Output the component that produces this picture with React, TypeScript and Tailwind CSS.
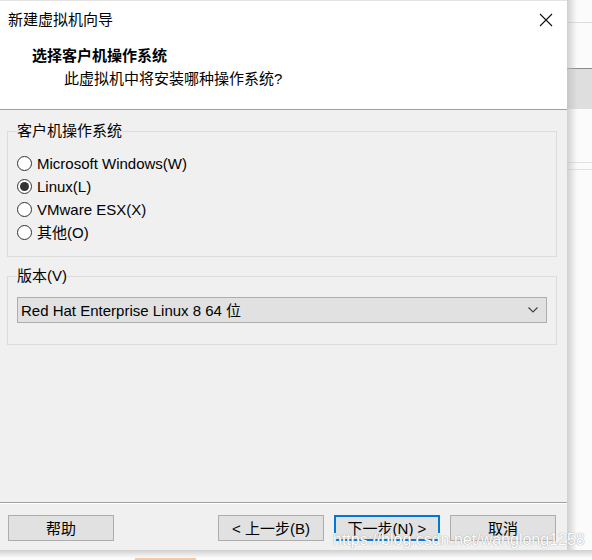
import React from "react";

const font = { fontFamily: '"Liberation Sans", "Noto Sans CJK SC", sans-serif' };

function Radio({ label, checked }: { label: string; checked?: boolean }) {
  return (
    <div className="flex items-center h-[23px] gap-[5px]">
      <span className="w-[15px] h-[15px] rounded-full border border-[#333333] bg-white flex items-center justify-center">
        {checked && <span className="w-[9px] h-[9px] rounded-full bg-[#333333]" />}
      </span>
      <span className="text-[15px] leading-none text-black">{label}</span>
    </div>
  );
}

function Btn({ label, primary }: { label: string; primary?: boolean }) {
  return (
    <div
      className={
        "w-[106px] h-[26px] flex items-center justify-center bg-[#e1e1e1] text-[15px] leading-none text-black " +
        (primary ? "border-2 border-[#0078d7]" : "border border-[#adadad]")
      }
    >
      {label}
    </div>
  );
}

export default function App() {
  return (
    <div className="w-[592px] h-[560px] relative overflow-hidden bg-[#fbfbfb] flex flex-col" style={font}>
      <div className="flex h-[550px]">
        {/* Dialog */}
        <div className="w-[567px] h-[550px] flex flex-col bg-[#f0f0f0]">
          <div className="bg-white border-t border-[#e3e3e3] h-[110px] flex flex-col border-b border-b-[#a0a0a0]">
            <div className="h-[37px] flex items-center justify-between pl-[8px] pr-[14px]">
              <span className="text-[15px] leading-none text-black">新建虚拟机向导</span>
              <svg width="14" height="14" viewBox="0 0 14 14">
                <path d="M1 1 L13 13 M13 1 L1 13" stroke="#111" strokeWidth="1.1" />
              </svg>
            </div>
            <div className="pl-[32px] pt-[10px]">
              <div className="text-[15px] font-bold leading-none text-black">选择客户机操作系统</div>
              <div className="pl-[32px] pt-[8px] text-[15px] leading-none text-black">此虚拟机中将安装哪种操作系统?</div>
            </div>
          </div>

          <div className="px-[7px] pt-[12px] flex flex-col">
            <fieldset className="border border-[#dcdcdc] h-[135px] w-[550px] pl-[9px] pt-[12px] m-0">
              <legend className="text-[15px] leading-[18px] text-black">客户机操作系统</legend>
              <div className="flex flex-col">
                <Radio label="Microsoft Windows(W)" />
                <Radio label="Linux(L)" checked />
                <Radio label="VMware ESX(X)" />
                <Radio label="其他(O)" />
              </div>
            </fieldset>

            <fieldset className="border border-[#dcdcdc] h-[78px] w-[550px] mt-[10px] pl-[9px] pt-[12px] m-0">
              <legend className="text-[15px] leading-[18px] text-black">版本(V)</legend>
              <div className="w-[530px] h-[26px] bg-[#e1e1e1] border border-[#adadad] flex items-center justify-between pl-[3px] pr-[8px]">
                <span className="text-[15px] leading-none text-black">Red Hat Enterprise Linux 8 64 位</span>
                <svg width="10" height="6" viewBox="0 0 10 6">
                  <path d="M0.5 0.5 L5 5 L9.5 0.5" stroke="#404040" strokeWidth="1.1" fill="none" />
                </svg>
              </div>
            </fieldset>
          </div>

          <div className="flex-1" />

          <div className="border-t border-[#a0a0a0]">
            <div className="border-t border-white h-[47px] flex items-start pt-[11px] pl-[8px]">
              <Btn label="帮助" />
              <div className="w-[104px]" />
              <Btn label="< 上一步(B)" />
              <div className="w-[10px]" />
              <Btn label="下一步(N) >" primary />
              <div className="w-[10px]" />
              <Btn label="取消" />
            </div>
          </div>
        </div>

        {/* Right side background */}
        <div className="flex-1 relative flex flex-col bg-[#fbfbfb]">
          <div className="h-[22px]" />
          <div className="h-[1px] bg-[#dcdcdc]" />
          <div className="h-[45px]" />
          <div className="h-[1px] bg-[#8a8a8a]" />
          <div className="h-[40px] bg-[#dedede]" />
          <div className="h-[53px]" />
          <div className="h-[1px] bg-[#e0e0e0]" />
          <div className="h-[6px]" />
          <div className="h-[1px] bg-[#e0e0e0]" />
          <div className="absolute inset-y-0 left-0 w-[10px] bg-gradient-to-r from-[#bdbdbd] to-transparent opacity-70" />
        </div>
      </div>

      {/* Bottom background */}
      <div className="flex-1 relative bg-[#fbfbfb]">
        <div className="absolute inset-x-0 top-0 h-[8px] bg-gradient-to-b from-[#bdbdbd] to-transparent opacity-70" />
        <div className="absolute left-[135px] bottom-0 w-[61px] h-[2px] bg-[#f5c9a5]" />
      </div>

      {/* Watermark */}
      <div
        className="absolute left-[333px] top-[532px] text-[16px] leading-none text-white"
        style={{ fontFamily: '"Liberation Sans", Arial, sans-serif', textShadow: "0 0 1px #a0a0a0, 0 0 1px #b0b0b0" }}
      >
        https://blog.csdn.net/wanglong1258
      </div>
    </div>
  );
}
